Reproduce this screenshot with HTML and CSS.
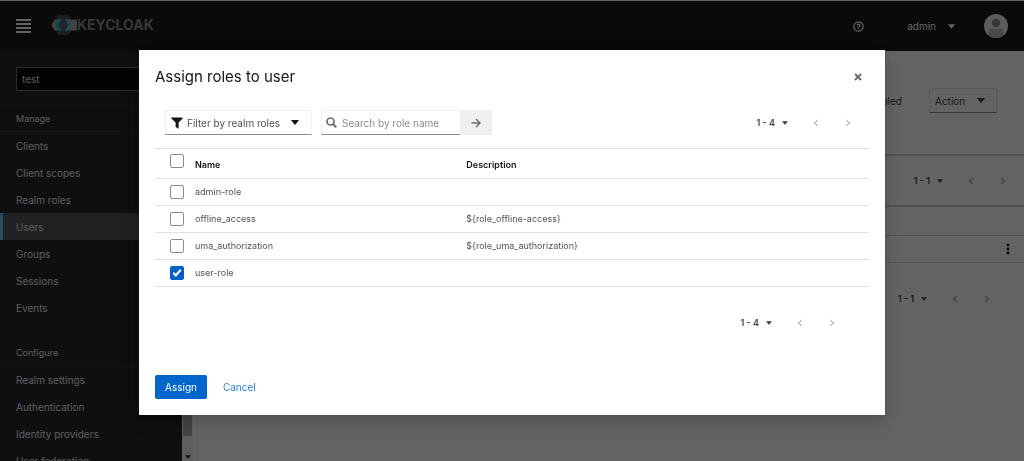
FILE: index.html
```html
<!DOCTYPE html>
<html lang="en">
<head>
<meta charset="utf-8">
<title>Keycloak Administration Console</title>
<link rel="stylesheet" href="styles.css">
</head>
<body>
<svg class="defs" aria-hidden="true">
  <symbol id="caret" viewBox="0 0 8 5"><path d="M0 0h8L4.5 4.4q-.5.5-1 0z"/></symbol>
  <symbol id="prev" viewBox="0 0 6 8"><path d="M4.7 1 1.6 4l3.100 3" fill="none" stroke="currentColor" stroke-width="1.500"/></symbol>
  <symbol id="next" viewBox="0 0 6 8"><path d="M1.300 1l3.100 3-3.100 3" fill="none" stroke="currentColor" stroke-width="1.500"/></symbol>
</svg>
<div class="page">
  <header class="masthead">
    <button class="menu-toggle" aria-label="Global navigation"><span></span><span></span><span></span><span></span></button>
    <a class="brand" href="#">
      <svg width="26" height="22" viewBox="0 0 26 22" aria-hidden="true">
        <path d="M7 1h11l5.500 10L18 21H7L1.500 11z" fill="#4b4b4b"/>
        <path d="M3.500 5.500H26v11H3.500L.5 11z" fill="#a5a5a5"/>
        <path d="M9 5h7.500l3.500 6-3.500 6H9l-3.500-6z" fill="#5a5a5a"/>
        <path d="M8 5h3L7.700 11l3.300 6H8l-3.500-6z" fill="#00b8e3"/>
        <path d="M14 5h3l3.500 6-3.500 6h-3l3.300-6z" fill="#33c6e9"/>
      </svg>
      <span class="brand-name">KEYCLOAK</span>
    </a>
    <div class="masthead-tools">
      <button class="help" aria-label="Help">
        <svg width="11" height="11" viewBox="0 0 11 11"><circle cx="5.500" cy="5.500" r="4.700" fill="none" stroke="currentColor" stroke-width="1.200"/><path d="M4 4.400Q4.200 3.200 5.600 3.200T7 4.400Q7 5 5.600 5.800v.6" fill="none" stroke="currentColor" stroke-width="1.200"/><circle cx="5.600" cy="7.800" r=".8" fill="currentColor"/></svg>
      </button>
      <button class="account">admin <svg width="7" height="5"><use href="#caret"/></svg></button>
      <svg class="avatar" width="24" height="24" viewBox="0 0 24 24" role="img" aria-label="Avatar"><circle cx="12" cy="12" r="12" fill="#f0f0f0"/><circle cx="12" cy="9" r="4.200" fill="#8a8d90"/><path d="M4.500 21.400Q4 14.500 9 14.500q3 1 6 0 5 0 4.500 6.900a12 12 0 0 1-15 0z" fill="#b8bbbe"/></svg>
    </div>
  </header>
  <div class="workspace">
    <aside class="sidebar">
      <nav class="nav">
        <div class="realm"><button class="realm-button">test</button></div>
        <h2 class="nav-title">Manage</h2>
        <ul>
          <li><a href="#">Clients</a></li><li><a href="#">Client scopes</a></li><li><a href="#">Realm roles</a></li><li><a href="#" class="current" aria-current="page">Users</a></li><li><a href="#">Groups</a></li><li><a href="#">Sessions</a></li><li><a href="#">Events</a></li>
        </ul>
        <h2 class="nav-title nav-title-next">Configure</h2>
        <ul>
          <li><a href="#">Realm settings</a></li><li><a href="#">Authentication</a></li><li><a href="#">Identity providers</a></li><li><a href="#">User federation</a></li>
        </ul>
      </nav>
      <div class="scrollbar" aria-hidden="true"><div class="thumb"></div><svg width="6" height="4"><use href="#caret"/></svg></div>
    </aside>
    <main class="content">
      <div class="content-head"><span>Enabled</span><button class="action">Action <svg width="8" height="5"><use href="#caret"/></svg></button></div>
      <div class="content-tools">
        <div class="pager"><button class="pager-range">1 - 1 <svg width="6" height="4"><use href="#caret"/></svg></button><button class="pager-step" aria-label="Previous"><svg width="6" height="8"><use href="#prev"/></svg></button><button class="pager-step" aria-label="Next"><svg width="6" height="8"><use href="#next"/></svg></button></div>
      </div>
      <div class="content-row content-row-head"></div>
      <div class="content-row"><button class="kebab" aria-label="Actions"><svg width="4" height="12" viewBox="0 0 4 12"><circle cx="2" cy="2" r="1.400"/><circle cx="2" cy="6" r="1.400"/><circle cx="2" cy="10" r="1.400"/></svg></button></div>
      <div class="content-foot">
        <div class="pager"><button class="pager-range">1 - 1 <svg width="6" height="4"><use href="#caret"/></svg></button><button class="pager-step" aria-label="Previous"><svg width="6" height="8"><use href="#prev"/></svg></button><button class="pager-step" aria-label="Next"><svg width="6" height="8"><use href="#next"/></svg></button></div>
      </div>
    </main>
  </div>
</div>
<div class="backdrop">
  <section class="modal" role="dialog" aria-modal="true" aria-labelledby="modal-title">
    <header class="modal-head">
      <h1 id="modal-title">Assign roles to user</h1>
      <button class="close" aria-label="Close"><svg width="8" height="8" viewBox="0 0 8 8"><path d="M1 1l6 6M7 1 1 7" stroke="currentColor" stroke-width="2"/></svg></button>
    </header>
    <div class="toolbar">
      <button class="filter"><svg width="12" height="12" viewBox="0 0 12 12"><path d="M.6.500h10.800q.6.400.2.900L7.600 5.600v5.600q-.3.600-.9.200L4.600 9.800V5.600L.4 1.400Q0 .8.600.500z"/></svg><span>Filter by realm roles</span><svg width="8" height="5"><use href="#caret"/></svg></button>
      <div class="search">
        <label class="search-field"><svg width="11" height="11" viewBox="0 0 11 11"><circle cx="4.500" cy="4.500" r="3.500" fill="none" stroke="currentColor" stroke-width="1.700"/><path d="M7 7l3.300 3.300" stroke="currentColor" stroke-width="2"/></svg><input type="text" placeholder="Search by role name" aria-label="Search by role name"></label>
        <button class="search-go" aria-label="Search"><svg width="10" height="10" viewBox="0 0 10 10"><path d="M.5 5h8M5 1l4 4-4 4" fill="none" stroke="currentColor" stroke-width="1.500"/></svg></button>
      </div>
      <div class="pager"><button class="pager-range">1 - 4 <svg width="6" height="4"><use href="#caret"/></svg></button><button class="pager-step" aria-label="Previous"><svg width="6" height="8"><use href="#prev"/></svg></button><button class="pager-step" aria-label="Next"><svg width="6" height="8"><use href="#next"/></svg></button></div>
    </div>
    <table class="roles">
      <thead><tr><th class="select"><input type="checkbox" aria-label="Select all rows"></th><th class="name">Name</th><th>Description</th></tr></thead>
      <tbody>
        <tr><td class="select"><input type="checkbox" id="r1"></td><td><label for="r1">admin-role</label></td><td></td></tr>
        <tr><td class="select"><input type="checkbox" id="r2"></td><td><label for="r2">offline_access</label></td><td>${role_offline-access}</td></tr>
        <tr><td class="select"><input type="checkbox" id="r3"></td><td><label for="r3">uma_authorization</label></td><td>${role_uma_authorization}</td></tr>
        <tr><td class="select"><input type="checkbox" id="r4" checked></td><td><label for="r4">user-role</label></td><td></td></tr>
      </tbody>
    </table>
    <div class="roles-foot">
      <div class="pager"><button class="pager-range">1 - 4 <svg width="6" height="4"><use href="#caret"/></svg></button><button class="pager-step" aria-label="Previous"><svg width="6" height="8"><use href="#prev"/></svg></button><button class="pager-step" aria-label="Next"><svg width="6" height="8"><use href="#next"/></svg></button></div>
    </div>
    <footer class="modal-actions"><button class="primary">Assign</button><button class="link">Cancel</button></footer>
  </section>
</div>
</body>
</html>
```
FILE: styles.css
```css
* { box-sizing: border-box; }
body { margin: 0; font: 10px/16px Inter, "Liberation Sans", sans-serif; color: #151515; overflow: hidden; }
button { font: inherit; color: inherit; background: none; border: 0; padding: 0; display: flex; align-items: center; }
svg { flex: none; fill: currentColor; }
h1, h2, ul { margin: 0; padding: 0; font-weight: 400; list-style: none; }
a { color: inherit; text-decoration: none; }
.defs { position: absolute; width: 0; height: 0; }

.page { height: 100vh; display: flex; flex-direction: column; }
.masthead { height: 51px; flex: none; display: flex; align-items: center; padding: 0 16px; background: #151515; border-top: 1px solid #fff; color: #fff; }
.menu-toggle { flex-direction: column; gap: 2px; width: 15px; margin-right: 20px; }
.menu-toggle span { width: 100%; height: 2px; background: #fff; }
.brand { display: flex; align-items: center; margin-bottom: 3px; }
.brand-name { font-size: 14px; font-weight: 700; color: #8c8c8c; }
.masthead-tools { margin-left: auto; display: flex; align-items: center; }
.help { margin-right: 43px; }
.account { gap: 12px; margin-right: 29px; }

.workspace { flex: 1; min-height: 0; display: flex; }
.sidebar { flex: none; width: 193px; display: flex; background: #212427; color: #e8e8e8; overflow: hidden; }
.nav { flex: 1; }
.realm { padding: 16px 16px 15px; border-bottom: 1px solid #2b2e31; }
.realm-button { width: 100%; height: 24px; padding: 0 5px; background: #030303; border: 1px solid #6a6e73; }
.nav-title { font-size: 9px; padding: 4px 16px; border-bottom: 1px solid #33363a; }
.nav-title-next { margin-top: 20px; }
.nav a { display: flex; align-items: center; height: 27px; padding: 0 16px; }
.nav .current { background: #4f5255; box-shadow: inset 3px 0 #73bcf7; }
.scrollbar { width: 11px; background: #f1f1f1; color: #303030; display: flex; flex-direction: column; align-items: center; justify-content: space-between; padding-bottom: 2px; }
.thumb { width: 9px; margin-top: 60px; background: #b0b0b0; flex: 0 1 325px; }

.content { flex: 1; min-width: 0; background: #fff; }
.content-head { display: flex; align-items: center; justify-content: flex-end; gap: 27px; height: 105px; padding: 0 27px 4px 0; border-bottom: 2px solid #d2d2d2; color: #3c3f42; }
.action { height: 25px; width: 68px; justify-content: space-between; padding: 0 11px 0 5px; border: 1px solid #e8e8e8; border-bottom-color: #8a8d90; }
.content-tools { height: 51px; display: flex; align-items: center; padding-right: 5px; border-bottom: 2px solid #d2d2d2; }
.content-row { height: 27px; display: flex; align-items: center; justify-content: flex-end; padding-right: 14px; border-bottom: 1px solid #d2d2d2; }
.content-row-head { height: 29px; }
.content-foot { display: flex; padding: 24px 21px 0 0; }

.pager { margin-left: auto; display: flex; align-items: center; height: 24px; }
.pager-range { gap: 7px; margin-right: 12px; font-size: 9px; font-weight: 600; color: #3c3f42; }
.pager-step { width: 32px; height: 24px; justify-content: center; color: #c0c2c4; }
.content .pager-step { color: #aaa; }

.backdrop { position: fixed; inset: 0; display: flex; align-items: center; justify-content: center; padding-top: 4px; background: rgba(3, 3, 3, .62); }
.modal { width: 90%; max-width: 746px; padding: 16px; background: #fff; box-shadow: 0 8px 16px rgba(3, 3, 3, .16), 0 0 6px rgba(3, 3, 3, .1); }
.modal-head { display: flex; align-items: center; justify-content: space-between; padding: 1px 7px 0 0; }
.modal-head h1 { font-size: 15px; line-height: 20px; }
.close { color: #6a6e73; }
.toolbar { display: flex; align-items: center; padding: 23px 5px 13px 10px; }
.filter { height: 25px; width: 147px; padding: 0 12px 0 5px; gap: 4px; color: #151515; border: 1px solid #f0f0f0; border-bottom-color: #8a8d90; }
.filter span { flex: 1; text-align: left; white-space: nowrap; color: #4f5255; }
.search { display: flex; margin-left: 9px; }
.search-field { display: flex; align-items: center; gap: 5px; width: 139px; height: 25px; padding-left: 4px; border: 1px solid #f0f0f0; border-bottom-color: #8a8d90; border-right: 0; color: #6a6e73; }
.search-field input { flex: 1; min-width: 0; padding: 0; border: 0; outline: 0; font: inherit; background: none; }
.search-field input::placeholder { color: #8a8d90; opacity: 1; }
.search-go { width: 32px; height: 25px; justify-content: center; background: #f0f0f0; color: #6a6e73; }

.roles { width: 100%; table-layout: fixed; border-collapse: separate; border-spacing: 0; border-top: 1px solid #e0e0e0; font-size: 9px; line-height: 16px; text-align: left; }
.roles th, .roles td { height: 27px; padding: 0; border-bottom: 1px solid #e0e0e0; vertical-align: middle; color: #4f5255; }
.roles th { height: 30px; padding-top: 3px; font-weight: 600; color: #151515; }
.roles th.select { padding: 0 0 5px 15px; }
.roles td.select { padding-left: 15px; }
.select { width: 40px; }
.name { width: 38%; }
.roles input { appearance: none; display: block; width: 14px; height: 14px; margin: 0; border: 1px solid #8a8d90; border-radius: 2px; background: #fff; }
.roles input:checked { border-color: #0060cc; background: #0060cc; display: grid; place-items: center; }
.roles input:checked::before { content: ""; width: 9px; height: 8px; background: #fff; clip-path: polygon(0 55%, 16% 36%, 36% 58%, 84% 0, 100% 18%, 38% 100%); }
.roles-foot { display: flex; padding: 24px 21px 0 0; }
.modal-actions { display: flex; align-items: center; gap: 16px; padding-top: 40px; }
.primary { height: 24px; padding: 0 10px; border-radius: 2px; background: #06c; color: #fff; }
.link { color: #2b83d8; }
```
